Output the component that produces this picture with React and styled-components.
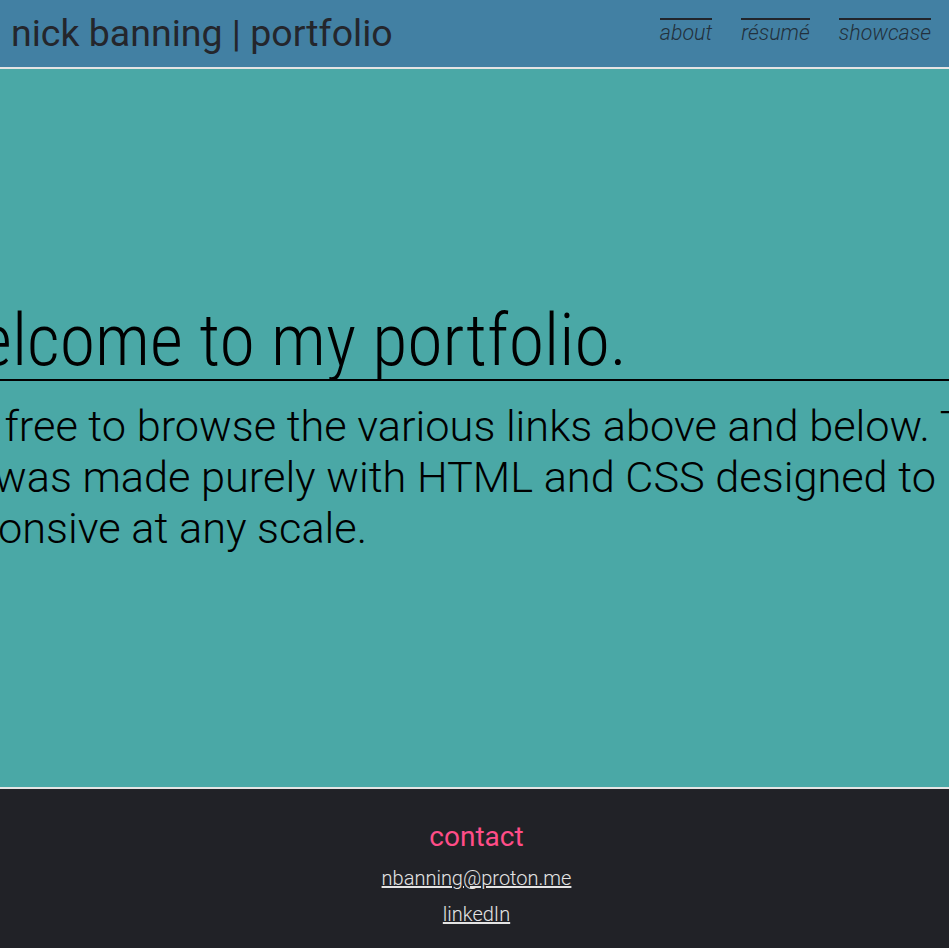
import React from "react";
import styled, { createGlobalStyle } from "styled-components";

const Global = createGlobalStyle`
  html, body { margin: 0; padding: 0; }
  body {
    font-family: Roboto, "Liberation Sans", sans-serif;
    overflow: hidden;
  }
`;

const Page = styled.div`
  display: flex;
  flex-direction: column;
  height: 100vh;
  overflow: hidden;
`;

const Header = styled.header`
  flex: none;
  height: 67px;
  display: flex;
  align-items: center;
  justify-content: space-between;
  padding: 0 18px 0 11px;
  background: #4280a3;
  border-bottom: 2px solid #e4e4e4;
`;

const Title = styled.h2`
  margin: 0;
  font-size: 37.5px;
  font-weight: 400;
  color: #24262c;
  line-height: 1.172;
`;

const Nav = styled.nav`
  display: flex;
  gap: 29px;
  align-self: flex-start;
  padding-top: 18px;
`;

const NavLink = styled.a`
  font-size: 21.4px;
  font-weight: 300;
  font-style: italic;
  color: #22303c;
  text-decoration: none;
  border-top: 2px solid #22252b;
  line-height: 1.172;
`;

const Main = styled.main`
  flex: 1;
  display: flex;
  align-items: center;
  justify-content: center;
  background: #4aa8a6;
  border-bottom: 2px solid #e4e4e4;
  min-height: 0;
`;

const Content = styled.div`
  flex: none;
  width: 1118px;
  color: #000;
`;

const Heading = styled.h1`
  margin: 0;
  padding-left: 9px;
  font-family: "Roboto Condensed", Roboto, "Liberation Sans", sans-serif;
  font-size: 72px;
  font-weight: 300;
  line-height: 1.07;
  border-bottom: 2px solid #000;
`;

const Lead = styled.p`
  margin: 20px 0 0;
  font-size: 43.3px;
  font-weight: 300;
  line-height: 51.3px;
`;

const Footer = styled.footer`
  flex: none;
  height: 159px;
  box-sizing: border-box;
  background: #212227;
  display: flex;
  flex-direction: column;
  align-items: center;
  padding: 32px 0 0 4px;
`;

const ContactTitle = styled.h3`
  margin: 0 0 6px;
  font-size: 28px;
  font-weight: 400;
  color: #ff4d88;
  line-height: 1.172;
`;

const ContactLink = styled.a`
  font-size: 20px;
  font-weight: 300;
  color: #e4e4e4;
  text-decoration: underline;
  line-height: 36px;
`;

export default function App() {
  return (
    <>
      <Global />
      <Page>
        <Header>
          <Title>nick banning | portfolio</Title>
          <Nav>
            <NavLink href="#">about</NavLink>
            <NavLink href="#">résumé</NavLink>
            <NavLink href="#">showcase</NavLink>
          </Nav>
        </Header>
        <Main>
          <Content>
            <Heading>Welcome to my portfolio.</Heading>
            <Lead>
              Feel free to browse the various links above and below. This site
              was made purely with HTML and CSS designed to be responsive at any
              scale.
            </Lead>
          </Content>
        </Main>
        <Footer>
          <ContactTitle>contact</ContactTitle>
          <ContactLink href="#">nbanning@proton.me</ContactLink>
          <ContactLink href="#">linkedIn</ContactLink>
        </Footer>
      </Page>
    </>
  );
}
